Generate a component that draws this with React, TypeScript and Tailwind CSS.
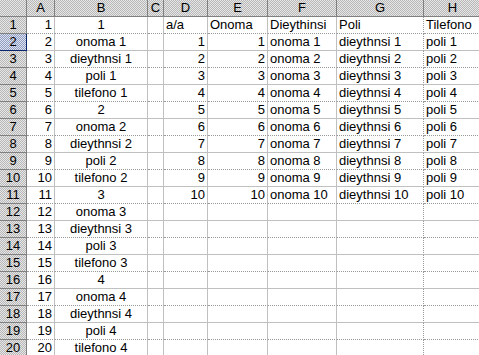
import React from "react";

type Align = "l" | "r" | "c";
type Cell = { t: string; a: Align } | null;

const cols = ["A", "B", "C", "D", "E", "F", "G", "H"];

function buildRows(): Cell[][] {
  const rows: Cell[][] = [];
  const bLabels = ["onoma", "dieythnsi", "poli", "tilefono"];
  for (let r = 1; r <= 20; r++) {
    const row: Cell[] = [];
    row.push({ t: String(r), a: "r" });
    const g = Math.floor((r - 1) / 5) + 1;
    const m = (r - 1) % 5;
    row.push({ t: m === 0 ? String(g) : `${bLabels[m - 1]} ${g}`, a: "c" });
    row.push(null);
    if (r === 1) {
      row.push({ t: "a/a", a: "l" });
      row.push({ t: "Onoma", a: "l" });
      row.push({ t: "Dieythinsi", a: "l" });
      row.push({ t: "Poli", a: "l" });
      row.push({ t: "Tilefono", a: "l" });
    } else if (r <= 11) {
      const n = r - 1;
      row.push({ t: String(n), a: "r" });
      row.push({ t: String(n), a: "r" });
      row.push({ t: `onoma ${n}`, a: "l" });
      row.push({ t: `dieythnsi ${n}`, a: "l" });
      row.push({ t: `poli ${n}`, a: "l" });
    } else {
      row.push(null, null, null, null, null);
    }
    rows.push(row);
  }
  return rows;
}

const hdrBg =
  "bg-[image:repeating-conic-gradient(#b8b8b8_0%_25%,#e6e6e6_0%_50%)] bg-[length:2px_2px]";
const selBg =
  "bg-[image:repeating-conic-gradient(#8e9cc4_0%_25%,#dfe3ee_0%_50%)] bg-[length:2px_2px]";

export default function App() {
  const rows = buildRows();
  return (
    <div className="w-[479px] h-[355px] overflow-hidden bg-white">
      <div
        className="grid w-[482px] grid-cols-[27px_28px_93px_16px_44px_60px_69px_87px_58px] auto-rows-[17px] text-[13px] leading-[16px] text-black"
        style={{ fontFamily: '"Liberation Sans", Arial, sans-serif' }}
      >
        <div className={`${hdrBg} border-r border-b border-[#808080]`} />
        {cols.map((c) => (
          <div
            key={c}
            className={`${hdrBg} border-r border-b border-[#808080] flex items-end justify-center`}
          >
            {c}
          </div>
        ))}
        {rows.map((row, i) => {
          const r = i + 1;
          const dotted = r % 2 === 1;
          const sel = r === 2;
          return (
            <React.Fragment key={r}>
              <div
                className={`${sel ? selBg + " border-[#0a246a]" : hdrBg + " border-[#808080]"} border-r border-b flex items-end justify-center`}
              >
                {r}
              </div>
              {row.map((cell, j) => (
                <div
                  key={j}
                  className={`border-b border-r ${dotted ? "border-b-[#9a9a9a] border-dotted" : "border-b-[#c0c0c0] border-solid"} ${j === 6 ? "border-r-[#9a9a9a] border-r-dotted" : "border-r-[#c0c0c0] border-r-solid"} flex items-end overflow-hidden whitespace-nowrap ${
                    cell?.a === "r"
                      ? "justify-end pr-[2px]"
                      : cell?.a === "c"
                      ? "justify-center"
                      : "justify-start pl-[2px]"
                  }`}
                  style={{
                    borderRightStyle: j === 6 ? "dotted" : "solid",
                    borderBottomStyle: dotted ? "dotted" : "solid",
                  }}
                >
                  {cell?.t ?? ""}
                </div>
              ))}
            </React.Fragment>
          );
        })}
      </div>
    </div>
  );
}
